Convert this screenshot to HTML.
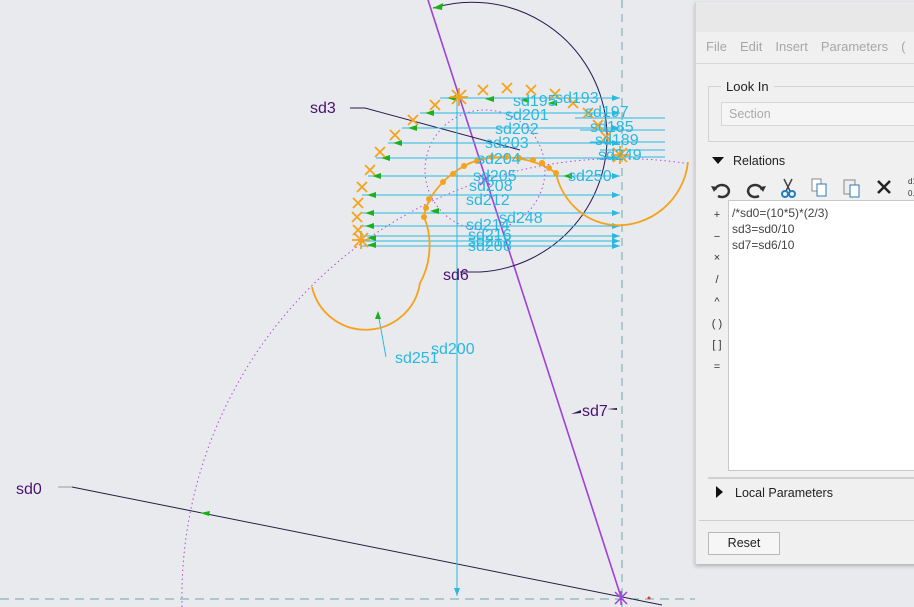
<!DOCTYPE html>
<html><head><meta charset="utf-8"><style>
body{margin:0;width:914px;height:607px;overflow:hidden;background:#e9eaee;font-family:"Liberation Sans",sans-serif;position:relative}
svg{position:absolute;left:0;top:0}
.dlg{position:absolute;left:695px;top:2px;width:225px;height:562px;background:#f0f0f0;border-left:1px solid #d4d4d4;box-shadow:0 2px 4px rgba(0,0,0,.25)}
.tb{height:30px;background:#e8e8e8}
.menu{height:31px;border-bottom:1px solid #d8d8d8;font-size:13px;color:#a7a7a7;line-height:30px;padding-left:10px}
.menu span{margin-right:13px}
.grp{position:absolute;left:12px;top:84px;width:220px;height:54px;border:1px solid #d2d2d2}
.lk{position:absolute;left:25px;top:77px;background:#f0f0f0;padding:0 5px;font-size:13px;color:#222}
.sel{position:absolute;left:25px;top:100px;width:200px;height:22px;background:#f5f5f5;border:1px solid #d6d6d6;font-size:12.5px;color:#aaa;line-height:22px;padding-left:7px}
.rel{position:absolute;left:16px;top:152px;font-size:12.5px;color:#222}
.tri{display:inline-block;width:0;height:0;border-left:6px solid transparent;border-right:6px solid transparent;border-top:7px solid #111;margin-right:9px;vertical-align:1px}
.trir{display:inline-block;width:0;height:0;border-top:6px solid transparent;border-bottom:6px solid transparent;border-left:7px solid #111;margin-right:12px;vertical-align:-1px}
.ta{position:absolute;left:32px;top:198px;width:200px;height:271px;background:#fff;border:1px solid #c8c8c8;font-size:12px;color:#444;line-height:16px;padding:4px 3px;box-sizing:border-box}
.ops{position:absolute;left:14px;top:203px;font-size:11px;color:#333;line-height:21.7px;width:14px;text-align:center}
.sep{position:absolute;left:12px;top:475px;width:220px;border-top:2px solid #d0d0d0}
.lp{position:absolute;left:20px;top:484px;font-size:12.5px;color:#222}
.sep2{position:absolute;left:3px;top:518px;width:220px;border-top:1px solid #cfcfcf}
.btn{position:absolute;left:12px;top:530px;width:70px;height:21px;border:1px solid #b9b9b9;background:#f6f6f6;font-size:12.5px;text-align:center;line-height:21px;color:#222}
</style></head><body>
<svg width="914" height="607" viewBox="0 0 914 607">
<defs><marker id="ca" markerWidth="8" markerHeight="6" refX="8" refY="3" orient="auto"><path d="M0,0L8,3L0,6z" fill="#27b9e0"/></marker></defs>
<line x1="622" y1="0" x2="622" y2="607" stroke="#6aa8a8" stroke-dasharray="8,6"/>
<line x1="0" y1="599" x2="695" y2="599" stroke="#6aa8a8" stroke-dasharray="9,6"/>
<path d="M182,607 A439,439 0 0 1 690,164" fill="none" stroke="#b04ad8" stroke-dasharray="1.5,3"/>
<circle cx="485" cy="170" r="60" fill="none" stroke="#b04ad8" stroke-dasharray="1.5,3"/>
<line x1="428" y1="0" x2="622" y2="600" stroke="#a040d8" stroke-width="1.6"/>
<line x1="58" y1="487" x2="72" y2="487" stroke="#999"/>
<line x1="72" y1="487" x2="662" y2="605" stroke="#202040"/>
<path d="M200,513l10,-2l-1,5z" fill="#1ab21a"/>
<path d="M433,8 A135,135 0 1 1 480,272" fill="none" stroke="#2a1a50"/>
<line x1="480" y1="272" x2="460" y2="272" stroke="#2a1a50"/>
<path d="M433,8l10,-5l-1,7z" fill="#1ab21a"/>
<path d="M350,108 L365,108 L520,150" fill="none" stroke="#2a1a50"/>
<path d="M571,414 l10,-4 l0,3z M607,409 l10,-1 l0,2z" fill="#2a1a50"/>
<line x1="457" y1="97" x2="457" y2="596" stroke="#27b9e0" marker-end="url(#ca)"/>
<line x1="378" y1="313" x2="386" y2="357" stroke="#27b9e0"/>
<path d="M378,311 l-3,8 l6,0z" fill="#1ab21a"/>
<g stroke="#27b9e0" fill="none">
<line x1="440" y1="98" x2="620" y2="98" marker-end="url(#ca)"/>
<line x1="420" y1="113" x2="620" y2="113" marker-end="url(#ca)"/>
<line x1="402" y1="128" x2="620" y2="128" marker-end="url(#ca)"/>
<line x1="388" y1="143" x2="620" y2="143" marker-end="url(#ca)"/>
<line x1="376" y1="158" x2="620" y2="158" marker-end="url(#ca)"/>
<line x1="368" y1="176" x2="620" y2="176" marker-end="url(#ca)"/>
<line x1="362" y1="195" x2="620" y2="195" marker-end="url(#ca)"/>
<line x1="360" y1="213" x2="620" y2="213" marker-end="url(#ca)"/>
<line x1="360" y1="226" x2="620" y2="226" marker-end="url(#ca)"/>
<line x1="362" y1="236" x2="620" y2="236" marker-end="url(#ca)"/>
<line x1="362" y1="241" x2="620" y2="241" marker-end="url(#ca)"/>
<line x1="362" y1="246" x2="620" y2="246" marker-end="url(#ca)"/>
<line x1="575" y1="118" x2="665" y2="118"/><line x1="580" y1="130" x2="665" y2="130"/>
<line x1="590" y1="142" x2="665" y2="142"/><line x1="600" y1="150" x2="665" y2="150"/>
<line x1="605" y1="157" x2="665" y2="157"/>
</g>
<g fill="#1ab21a">
<path d="M447,98l9,-3v6z M425,113l9,-3v6z M408,128l9,-3v6z M393,143l9,-3v6z M381,158l9,-3v6z M372,176l9,-3v6z M367,195l9,-3v6z M365,213l9,-3v6z M365,226l9,-3v6z M367,238l9,-3v6z M367,245l9,-3v6z M563,176l9,-3v6z M430,211l9,-3v6z M485,99l9,-3v6z M520,100l9,-3v6z M548,103l9,-3v6z"/>
</g>
<g fill="none" stroke="#f5a21c" stroke-width="1.8">
<path d="M424,217 C426,200 440,180 464,166 C490,152 530,155 556,173"/>
<path d="M424,217 C432,235 432,262 420,283 A55,55 0 0 1 312,287"/>
<path d="M556,173 C560,195 580,222 613,225 C650,228 684,200 688,162"/>
</g>
<g fill="#f5a21c">
<circle cx="424" cy="217" r="3"/><circle cx="426" cy="208" r="3"/><circle cx="429" cy="199" r="3"/><circle cx="443" cy="182" r="3"/><circle cx="453" cy="174" r="3"/><circle cx="464" cy="166" r="3"/><circle cx="477" cy="161" r="3"/><circle cx="492" cy="157" r="3"/><circle cx="506" cy="157" r="3"/><circle cx="519" cy="158" r="3"/><circle cx="533" cy="160" r="3"/><circle cx="542" cy="163" r="3"/><circle cx="549" cy="168" r="3"/><circle cx="556" cy="173" r="3"/>
</g>
<g stroke="#f5a21c" stroke-width="1.8">
<path d="M-5,-5L5,5M5,-5L-5,5" transform="translate(483,90)"/>
<path d="M-5,-5L5,5M5,-5L-5,5" transform="translate(507,88)"/>
<path d="M-5,-5L5,5M5,-5L-5,5" transform="translate(531,90)"/>
<path d="M-5,-5L5,5M5,-5L-5,5" transform="translate(555,94)"/>
<path d="M-5,-5L5,5M5,-5L-5,5" transform="translate(573,103)"/>
<path d="M-5,-5L5,5M5,-5L-5,5" transform="translate(588,113)"/>
<path d="M-5,-5L5,5M5,-5L-5,5" transform="translate(598,125)"/>
<path d="M-5,-5L5,5M5,-5L-5,5" transform="translate(606,137)"/>
<path d="M-5,-5L5,5M5,-5L-5,5" transform="translate(435,105)"/>
<path d="M-5,-5L5,5M5,-5L-5,5" transform="translate(413,120)"/>
<path d="M-5,-5L5,5M5,-5L-5,5" transform="translate(395,135)"/>
<path d="M-5,-5L5,5M5,-5L-5,5" transform="translate(380,152)"/>
<path d="M-5,-5L5,5M5,-5L-5,5" transform="translate(370,170)"/>
<path d="M-5,-5L5,5M5,-5L-5,5" transform="translate(362,187)"/>
<path d="M-5,-5L5,5M5,-5L-5,5" transform="translate(358,203)"/>
<path d="M-5,-5L5,5M5,-5L-5,5" transform="translate(357,217)"/>
<path d="M-5,-5L5,5M5,-5L-5,5" transform="translate(358,230)"/>
<path d="M-7,-7L7,7M7,-7L-7,7M0,-9V9M-9,0H9" transform="translate(459,97)"/>
<path d="M-7,-7L7,7M7,-7L-7,7M0,-9V9M-9,0H9" transform="translate(361,240)"/>
<path d="M-7,-7L7,7M7,-7L-7,7M0,-9V9M-9,0H9" transform="translate(620,155)"/>
</g>
<path d="M-5,-5L5,5M5,-5L-5,5" transform="translate(485,180)" stroke="#a040d8" stroke-width="1.5"/>
<path d="M-6,-6L6,6M6,-6L-6,6M0,-7V7" transform="translate(621,598)" stroke="#a040d8" stroke-width="1.5"/>
<circle cx="649" cy="598" r="1.5" fill="#e33"/>
<g font-family="Liberation Sans" font-size="16" fill="#27b9e0">
<text x="513" y="106">sd195</text><text x="555" y="103">sd193</text>
<text x="505" y="120">sd201</text><text x="585" y="117">sd197</text>
<text x="495" y="134">sd202</text><text x="590" y="132">sd185</text>
<text x="485" y="148">sd203</text><text x="595" y="145">sd189</text>
<text x="477" y="164">sd204</text><text x="598" y="160">sd249</text>
<text x="473" y="181">sd205</text><text x="568" y="181">sd250</text>
<text x="469" y="191">sd208</text>
<text x="466" y="205">sd212</text>
<text x="499" y="223">sd248</text>
<text x="466" y="230">sd214</text>
<text x="468" y="240">sd216</text><text x="468" y="246">sd218</text><text x="468" y="251">sd206</text>
<text x="431" y="354">sd200</text>
<text x="395" y="363">sd251</text>
</g>
<g font-family="Liberation Sans" font-size="16" fill="#4a1070">
<text x="310" y="113">sd3</text><text x="443" y="280">sd6</text>
<text x="582" y="416">sd7</text><text x="16" y="494">sd0</text>
</g>
</svg>
<div class="dlg">
<div class="tb"></div>
<div class="menu"><span>File</span><span>Edit</span><span>Insert</span><span>Parameters</span><span>(</span></div>
<div class="grp"></div><div class="lk">Look In</div>
<div class="sel">Section</div>
<div class="rel"><span class="tri"></span>Relations</div>
<svg width="225" height="30" style="left:14px;top:172px" viewBox="0 0 225 30">
<path d="M5,16 a7,6 0 1 1 3,6" fill="none" stroke="#333" stroke-width="2.5"/><path d="M1,12l6,1l-3,5z" fill="#333"/>
<path d="M52,16 a7,6 0 1 0 -3,6" fill="none" stroke="#333" stroke-width="2.5"/><path d="M56,12l-6,1l3,5z" fill="#333"/>
<path d="M74,5l6,12M82,5l-6,12" stroke="#444" stroke-width="1.5"/><circle cx="75" cy="20" r="3" fill="none" stroke="#1f7fc0" stroke-width="2"/><circle cx="82" cy="20" r="3" fill="none" stroke="#1f7fc0" stroke-width="2"/>
<rect x="102" y="5" width="9" height="12" fill="#fff" stroke="#888"/><rect x="107" y="10" width="9" height="12" fill="#fff" stroke="#2a7bb8"/>
<rect x="134" y="6" width="11" height="14" fill="#eee" stroke="#888"/><rect x="140" y="11" width="9" height="12" fill="#fff" stroke="#2a7bb8"/>
<path d="M168,7l12,12M180,7l-12,12" stroke="#222" stroke-width="2.5"/>
<text x="198" y="10" font-size="8" fill="#333" font-family="Liberation Sans">d1</text><text x="198" y="22" font-size="8" fill="#333" font-family="Liberation Sans">0.0</text>
</svg>
<div class="ops">+<br>−<br>×<br>/<br>^<br>( )<br>[ ]<br>=</div>
<div class="ta">/*sd0=(10*5)*(2/3)<br>sd3=sd0/10<br>sd7=sd6/10</div>
<div class="sep"></div>
<div class="lp"><span class="trir"></span>Local Parameters</div>
<div class="sep2"></div>
<div class="btn">Reset</div>
</div>
</body></html>
